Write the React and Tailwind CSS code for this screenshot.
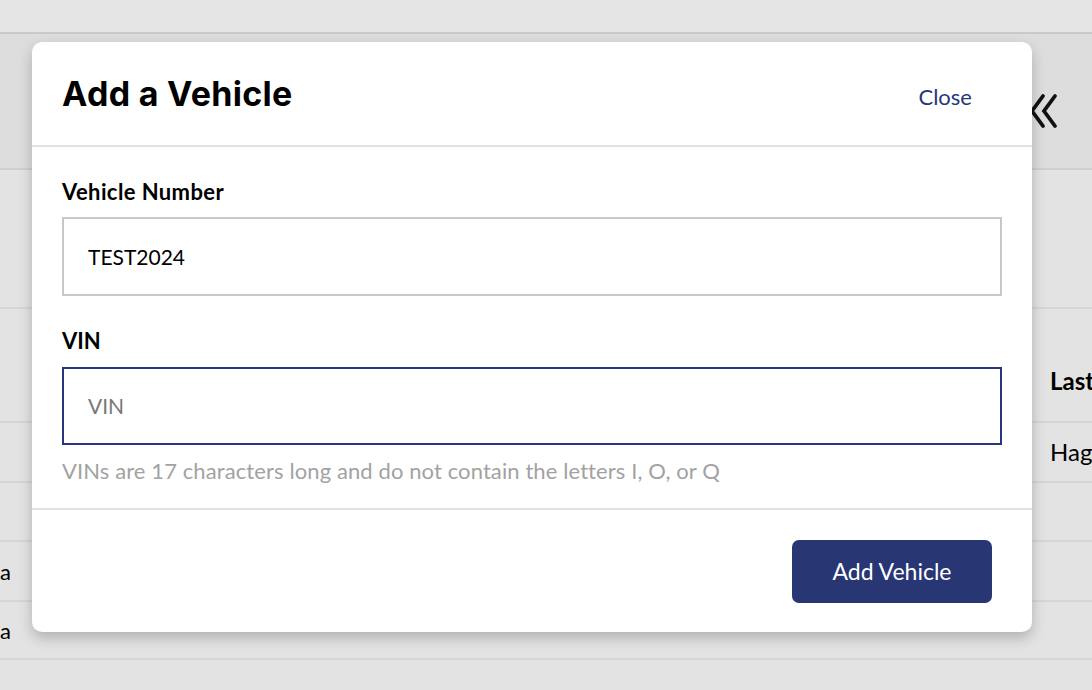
import React from "react";

const body = { fontFamily: "Lato, 'Liberation Sans', sans-serif" };

export default function App() {
  return (
    <div className="relative w-[1092px] h-[690px] overflow-hidden bg-[#e3e3e3]" style={body}>
      {/* background page */}
      <div className="h-[34px] bg-[#e5e5e5] border-b-2 border-[#c9c9c9]" />
      <div className="h-[136px] bg-[#dddddd] border-b-2 border-[#cfcfcf] flex justify-end items-start pt-[59px] pr-[33px]">
        <svg width="30" height="38" viewBox="0 0 30 38" fill="none" stroke="#111" strokeWidth="3.8" strokeLinecap="round" strokeLinejoin="miter">
          <polyline points="14,3 3,18 14,33" />
          <polyline points="26,3 15,18 26,33" />
        </svg>
      </div>
      <div className="h-[139px] border-b-2 border-[#d6d6d6]" />
      <div className="h-[114px] border-b-2 border-[#d6d6d6] flex justify-end items-end pb-[22px]">
        <span className="w-[42px] text-[24px] font-bold text-black whitespace-nowrap overflow-hidden">Last</span>
      </div>
      <div className="h-[60px] border-b-2 border-[#d6d6d6] flex justify-end items-center">
        <span className="w-[42px] text-[24px] text-black whitespace-nowrap overflow-hidden">Hagen</span>
      </div>
      <div className="h-[59px] border-b-2 border-[#d6d6d6]" />
      <div className="h-[60px] border-b-2 border-[#d6d6d6] flex items-center">
        <span className="pl-[0px] text-[22px] text-black">a</span>
      </div>
      <div className="h-[58px] border-b-2 border-[#d6d6d6] flex items-center">
        <span className="pl-[0px] text-[22px] text-black">a</span>
      </div>

      {/* modal */}
      <div className="absolute left-[32px] top-[42px] w-[1000px] h-[590px] bg-white rounded-[10px] shadow-[0_6px_14px_rgba(0,0,0,0.22)] flex flex-col">
        <div className="h-[105px] border-b-2 border-[#e2e2e2] flex items-center justify-between pl-[30px] pr-[60px]">
          <h2 className="text-[34px] font-bold text-black tracking-[0.3px]" style={{ fontFamily: "Inter, sans-serif" }}>Add a Vehicle</h2>
          <button className="text-[22px] text-[#26387a] mt-[6px]">Close</button>
        </div>
        <div className="flex-1 px-[30px] pt-[31px] border-b-2 border-[#e2e2e2]">
          <label className="block text-[22px] font-bold text-black leading-[28px] tracking-[0.4px]">Vehicle Number</label>
          <div className="mt-[11px] h-[79px] border-2 border-[#c8c8c8] flex items-center px-[24px] text-[21px] text-black">TEST2024</div>
          <label className="block mt-[31px] text-[22px] font-bold text-black leading-[28px]">VIN</label>
          <div className="mt-[12px] h-[78px] border-2 border-[#26387a] flex items-center px-[24px] text-[21px] text-[#777777]">VIN</div>
          <p className="mt-[12px] text-[22px] text-[#a2a2a2] leading-[28px] tracking-[0.1px]">VINs are 17 characters long and do not contain the letters I, O, or Q</p>
        </div>
        <div className="h-[122px] flex justify-end items-start pt-[30px] pr-[40px]">
          <button className="w-[200px] h-[63px] rounded-[7px] bg-[#283673] text-white text-[23px]">Add Vehicle</button>
        </div>
      </div>
    </div>
  );
}
